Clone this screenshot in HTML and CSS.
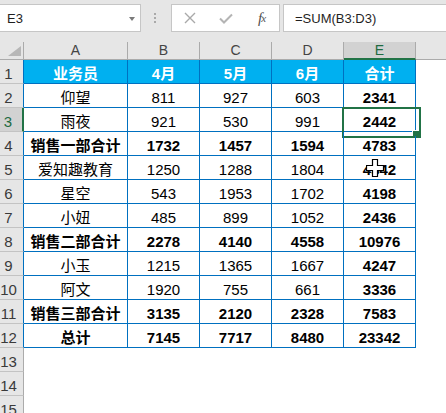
FILE: index.html
```html
<!DOCTYPE html>
<html lang="zh-CN">
<head>
<meta charset="utf-8">
<title>Excel</title>
<link rel="stylesheet" href="styles.css">
</head>
<body>
<div class="app">
  <div class="fbar">
    <div class="namebox"><span>E3</span><span class="caret"></span></div>
    <div class="grip"><i></i><i></i><i></i></div>
    <div class="btns">
      <span class="btn"><svg width="12" height="12" viewBox="0 0 12 12"><path d="M1 1L11 11M11 1L1 11" stroke="#a9a9a9" stroke-width="1.4" fill="none"/></svg></span>
      <span class="btn"><svg width="14" height="11" viewBox="0 0 14 11"><path d="M1 5.5L5 9.5L13 1.5" stroke="#b4b4b4" stroke-width="2" fill="none"/></svg></span>
      <span class="btn fx"><i>f</i><sub>x</sub></span>
    </div>
    <div class="formula">=SUM(B3:D3)</div>
  </div>

  <div class="sheet">
    <div class="row colhdr">
      <div class="corner"><svg width="13" height="10" viewBox="0 0 13 10"><polygon points="13,0 13,10 0,10" fill="#b7b7b7"/></svg></div>
      <div class="ch">A</div><div class="ch">B</div><div class="ch">C</div><div class="ch">D</div><div class="ch on">E</div><div class="ch last"></div>
    </div>

    <div class="row t"><div class="rh">1</div><div class="c th">业务员</div><div class="c th">4月</div><div class="c th">5月</div><div class="c th">6月</div><div class="c th">合计</div><div></div></div>
    <div class="row t"><div class="rh">2</div><div class="c">仰望</div><div class="c">811</div><div class="c">927</div><div class="c">603</div><div class="c b">2341</div><div></div></div>
    <div class="row t"><div class="rh sel">3</div><div class="c">雨夜</div><div class="c">921</div><div class="c">530</div><div class="c">991</div><div class="c b active">2442<span class="handle"></span></div><div></div></div>
    <div class="row t"><div class="rh">4</div><div class="c b">销售一部合计</div><div class="c b">1732</div><div class="c b">1457</div><div class="c b">1594</div><div class="c b">4783</div><div></div></div>
    <div class="row t"><div class="rh">5</div><div class="c">爱知趣教育</div><div class="c">1250</div><div class="c">1288</div><div class="c">1804</div><div class="c b cur">4342<svg class="cursor" width="18" height="18" viewBox="0 0 18 18"><polygon points="6.5,0.5 11.5,0.5 11.5,6.5 17.5,6.5 17.5,11.5 11.5,11.5 11.5,17.5 6.5,17.5 6.5,11.5 0.5,11.5 0.5,6.5 6.5,6.5" fill="#fff" stroke="#000" stroke-width="1.2"/></svg></div><div></div></div>
    <div class="row t"><div class="rh">6</div><div class="c">星空</div><div class="c">543</div><div class="c">1953</div><div class="c">1702</div><div class="c b">4198</div><div></div></div>
    <div class="row t"><div class="rh">7</div><div class="c">小妞</div><div class="c">485</div><div class="c">899</div><div class="c">1052</div><div class="c b">2436</div><div></div></div>
    <div class="row t"><div class="rh">8</div><div class="c b">销售二部合计</div><div class="c b">2278</div><div class="c b">4140</div><div class="c b">4558</div><div class="c b">10976</div><div></div></div>
    <div class="row t"><div class="rh">9</div><div class="c">小玉</div><div class="c">1215</div><div class="c">1365</div><div class="c">1667</div><div class="c b">4247</div><div></div></div>
    <div class="row t"><div class="rh">10</div><div class="c">阿文</div><div class="c">1920</div><div class="c">755</div><div class="c">661</div><div class="c b">3336</div><div></div></div>
    <div class="row t"><div class="rh">11</div><div class="c b">销售三部合计</div><div class="c b">3135</div><div class="c b">2120</div><div class="c b">2328</div><div class="c b">7583</div><div></div></div>
    <div class="row t"><div class="rh">12</div><div class="c b">总计</div><div class="c b">7145</div><div class="c b">7717</div><div class="c b">8480</div><div class="c b">23342</div><div></div></div>

    <div class="row"><div class="rh">13</div></div>
    <div class="row"><div class="rh">14</div></div>
    <div class="row"><div class="rh">15</div></div>
  </div>
</div>
</body>
</html>
```

FILE: styles.css
```css
* { box-sizing: border-box; }
html, body { margin: 0; padding: 0; }
body {
  background: #ffffff;
  font-family: "Liberation Sans", "Noto Sans CJK SC", sans-serif;
  color: #000;
  overflow: hidden;
}
.app { width: 446px; height: 413px; overflow: hidden; }

/* formula bar */
.fbar {
  height: 42px;
  background: #e6e6e6;
  display: flex;
  align-items: flex-start;
  padding-top: 4px;
}
.namebox {
  margin-left: -1px;
  width: 142px;
  height: 28px;
  background: #fff;
  border: 1px solid #c6c6c6;
  display: flex;
  align-items: center;
  justify-content: space-between;
  padding: 0 5px 0 7px;
  font-size: 13px;
  color: #1f1f1f;
}
.caret {
  width: 0; height: 0;
  border-left: 3.5px solid transparent;
  border-right: 3.5px solid transparent;
  border-top: 4px solid #7a7a7a;
  margin-top: 1px;
}
.grip {
  margin: 9px 0 0 13px;
  display: flex;
  flex-direction: column;
  gap: 2px;
}
.grip i { display: block; width: 2px; height: 2px; background: #a9a9a9; }
.btns {
  margin-left: 15px;
  width: 109px;
  height: 28px;
  background: #fff;
  border: 1px solid #c6c6c6;
  display: grid;
  grid-template-columns: 36px 36px 36px;
  align-items: center;
  justify-items: center;
}
.btn { display: flex; align-items: center; justify-content: center; }
.fx {
  font-family: "Liberation Serif", "DejaVu Serif", serif;
  color: #505050;
  font-size: 15px;
  line-height: 1;
}
.fx i { font-style: italic; }
.fx sub { font-style: italic; font-size: 11px; vertical-align: -1px; margin-left: -1px; }
.formula {
  margin-left: 3px;
  flex: 1;
  margin-right: -2px;
  height: 28px;
  background: #fff;
  border: 1px solid #c6c6c6;
  display: flex;
  align-items: center;
  padding-left: 11px;
  font-size: 13px;
  color: #1f1f1f;
}

/* sheet */
.row {
  display: grid;
  grid-template-columns: 24px 104px 72px 72px 72px 72px 1fr;
  height: 24px;
}
.colhdr { height: 18px; background: #e6e6e6; }
.corner {
  border-right: 1px solid #ababab;
  border-bottom: 1px solid #ababab;
  display: flex;
  align-items: flex-end;
  justify-content: flex-end;
  padding: 0 2px 3px 0;
}
.ch {
  border-right: 1px solid #ababab;
  border-bottom: 1px solid #ababab;
  font-size: 14px;
  color: #444;
  text-align: center;
  line-height: 17px;
}
.ch.on {
  background: #d2d2d2;
  color: #1e6b41;
  border-bottom: 2px solid #217346;
  line-height: 16px;
}
.ch.last { border-right: none; }

.rh {
  background: #e6e6e6;
  border-right: 1px solid #ababab;
  border-bottom: 1px solid #c3c3c3;
  font-size: 15px;
  color: #3a3a3a;
  display: flex;
  align-items: flex-end;
  justify-content: center;
  padding: 0 6px 1px 0;
  line-height: 17px;
  white-space: nowrap;
}
.t .rh { border-right-color: #0070c0; }
.t .rh.sel {
  background: #d2d2d2;
  color: #1e6b41;
  border-right: 2px solid #217346;
}

.c {
  position: relative;
  border-right: 1px solid #0070c0;
  border-bottom: 1px solid #0070c0;
  display: flex;
  align-items: flex-end;
  justify-content: center;
  font-size: 15px;
  line-height: 17px;
  padding-bottom: 1px;
  white-space: nowrap;
}
.c.b { font-weight: 700; }
.c.th {
  background: #00b0f0;
  color: #fff;
  font-weight: 700;
}

.active::after {
  content: "";
  position: absolute;
  left: -2px;
  top: -1px;
  width: 75px;
  height: 27px;
  border: 2px solid #217346;
  pointer-events: none;
}
.handle {
  position: absolute;
  left: 68px;
  top: 22px;
  width: 7px;
  height: 6px;
  background: #217346;
  border-left: 1px solid #fff;
  border-top: 1px solid #fff;
  z-index: 2;
}
.cursor {
  position: absolute;
  left: 22px;
  top: 3px;
  z-index: 3;
}
```
